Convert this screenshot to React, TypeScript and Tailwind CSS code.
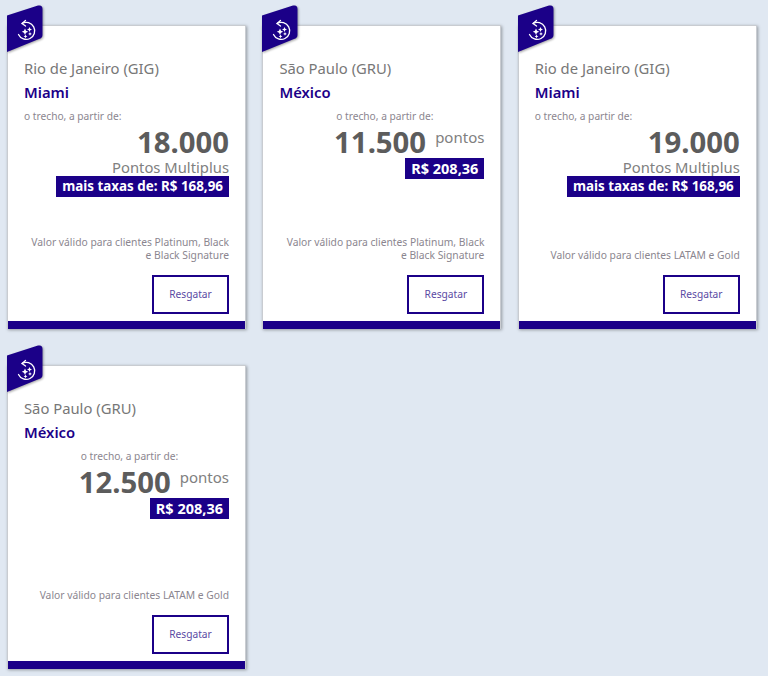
const font = { fontFamily: '"Noto Sans", "Open Sans", sans-serif' };

type Offer = {
  origin: string;
  destination: string;
  points: string;
  unit: string;
  inline: boolean;
  fee: string;
  note: string[];
};

const offers: Offer[] = [
  { origin: "Rio de Janeiro (GIG)", destination: "Miami", points: "18.000", unit: "Pontos Multiplus", inline: false, fee: "mais taxas de: R$ 168,96", note: ["Valor válido para clientes Platinum, Black", "e Black Signature"] },
  { origin: "São Paulo (GRU)", destination: "México", points: "11.500", unit: "pontos", inline: true, fee: "R$ 208,36", note: ["Valor válido para clientes Platinum, Black", "e Black Signature"] },
  { origin: "Rio de Janeiro (GIG)", destination: "Miami", points: "19.000", unit: "Pontos Multiplus", inline: false, fee: "mais taxas de: R$ 168,96", note: ["Valor válido para clientes LATAM e Gold"] },
  { origin: "São Paulo (GRU)", destination: "México", points: "12.500", unit: "pontos", inline: true, fee: "R$ 208,36", note: ["Valor válido para clientes LATAM e Gold"] },
];

function Ribbon() {
  return (
    <svg className="absolute left-[-1px] top-[-21px] drop-shadow-[1px_1px_1px_rgba(0,0,0,0.35)]" width="37" height="48" viewBox="0 0 37 48">
      <path d="M0 10.5 L31 0.6 Q35.5 -0.5 35.5 4 L35.5 30 Q35.5 33 32 34 L0 47 Z" fill="#1b0088" />
      <g fill="none" stroke="#fff" strokeWidth="1.3" strokeLinecap="round" strokeLinejoin="round">
        <path d="M15 18.5 A8.5 8.5 0 1 1 11.5 29.5" />
        <path d="M18.5 15.5 L15 18.5 L18.5 21" />
      </g>
      <g fill="#fff">
        <path d="M18 23.5 l1 2.3 l2.2 1 l-2.2 1 l-1 2.3 l-1 -2.3 l-2.2 -1 l2.2 -1 Z" />
        <path d="M22.5 22 l0.8 1.7 l1.7 0.8 l-1.7 0.8 l-0.8 1.7 l-0.8 -1.7 l-1.7 -0.8 l1.7 -0.8 Z" />
        <path d="M23 27 l0.6 1.3 l1.3 0.6 l-1.3 0.6 l-0.6 1.3 l-0.6 -1.3 l-1.3 -0.6 l1.3 -0.6 Z" />
        <path d="M18.5 29.5 l0.6 1.3 l1.3 0.6 l-1.3 0.6 l-0.6 1.3 l-0.6 -1.3 l-1.3 -0.6 l1.3 -0.6 Z" />
      </g>
    </svg>
  );
}

function OfferCard({ offer }: { offer: Offer }) {
  return (
    <div className="relative flex h-[304px] w-[239px] flex-col border border-[#c9ccd1] border-b-0 bg-white shadow-[1px_1px_3px_rgba(0,0,0,0.35)]">
      <Ribbon />
      <div className="flex flex-1 flex-col px-4 pt-[32px]">
        <div className="text-[14.8px] leading-5 text-[#777777]">{offer.origin}</div>
        <div className="mt-1 text-[14.8px] leading-5 font-semibold text-[#1b0088]">{offer.destination}</div>
        <div className={`mt-[6px] text-[10.2px] leading-[16px] text-[#8b868f] ${offer.inline ? "pl-[6px] text-center" : ""}`}>
          o trecho, a partir de:
        </div>
        <div className="mt-[1px] flex flex-col items-end">
          {offer.inline ? (
            <div className="flex h-[30px] items-start text-[#5c5c5c]">
              <span className="text-[29.3px] leading-[34px] font-bold">{offer.points}</span>
              <span className="mt-[2px] ml-[9px] text-[15px] leading-5 text-[#808080]">{offer.unit}</span>
            </div>
          ) : (
            <>
              <div className="h-[32px] text-[29.3px] leading-[34px] font-bold text-[#5c5c5c]">{offer.points}</div>
              <div className="text-[14.8px] leading-[20px] text-[#808080]">{offer.unit}</div>
            </>
          )}
          <div className={`h-[21px] bg-[#1b0088] px-[6px] leading-[21px] font-bold whitespace-nowrap text-white ${offer.inline ? "mt-[3px] text-[14.5px]" : "mt-[-1px] text-[13.4px]"}`}>
            {offer.fee}
          </div>
        </div>
        <div className="mt-auto text-right text-[10.3px] leading-[13px] text-[#8b868f]">
          {offer.note.map((line) => (
            <div key={line} className="whitespace-nowrap">{line}</div>
          ))}
        </div>
        <div className="mt-[13px] mb-[7px] flex justify-end">
          <button className="h-[39px] w-[77px] border-2 border-[#1b0088] bg-white pt-[1px] text-[10.2px] text-[#5a4aa3]">Resgatar</button>
        </div>
      </div>
      <div className="h-2 bg-[#1b0088]" />
    </div>
  );
}

export default function App() {
  return (
    <div className="min-h-[676px] w-[768px] overflow-hidden bg-[#e0e8f2] pt-[25px] pl-[7px]" style={font}>
      <div className="grid grid-cols-[239px_239px_239px] gap-x-[16.4px] gap-y-9">
        {offers.map((offer, i) => (
          <OfferCard key={i} offer={offer} />
        ))}
      </div>
    </div>
  );
}
